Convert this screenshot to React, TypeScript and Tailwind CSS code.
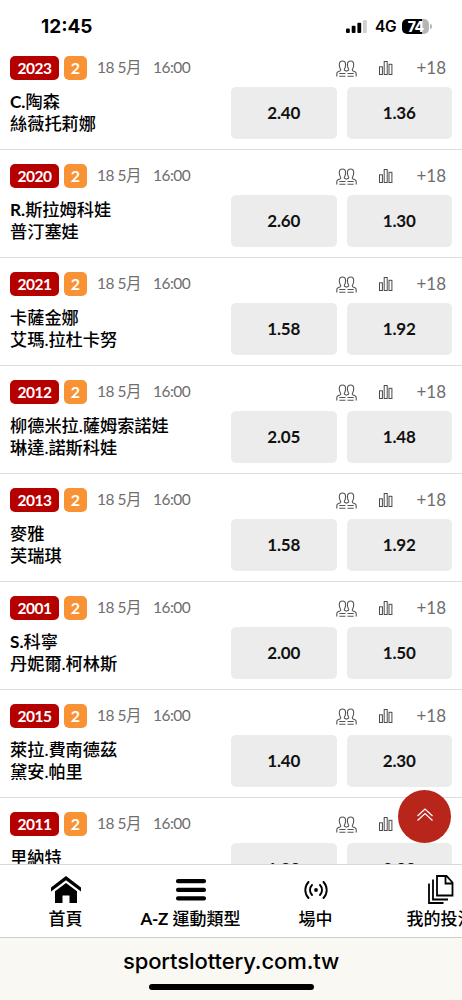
import type { ReactNode } from "react";

type Match = {
  code: string;
  initial?: string;
  home: string;
  away?: string;
  odds: [string, string];
};

const matches: Match[] = [
  { code: "2023", initial: "C.", home: "陶森", away: "絲薇托莉娜", odds: ["2.40", "1.36"] },
  { code: "2020", initial: "R.", home: "斯拉姆科娃", away: "普汀塞娃", odds: ["2.60", "1.30"] },
  { code: "2021", home: "卡薩金娜", away: "艾瑪.拉杜卡努", odds: ["1.58", "1.92"] },
  { code: "2012", home: "柳德米拉.薩姆索諾娃", away: "琳達.諾斯科娃", odds: ["2.05", "1.48"] },
  { code: "2013", home: "麥雅", away: "芙瑞琪", odds: ["1.58", "1.92"] },
  { code: "2001", initial: "S.", home: "科寧", away: "丹妮爾.柯林斯", odds: ["2.00", "1.50"] },
  { code: "2015", home: "萊拉.費南德茲", away: "黛安.帕里", odds: ["1.40", "2.30"] },
  { code: "2011", home: "里納特", odds: ["1.80", "2.00"] },
];

function StatusBar() {
  return (
    <header className="flex h-[42px] shrink-0 items-center justify-between pt-[11px] pr-[30px] pl-[41px] font-['Inter','Liberation_Sans',sans-serif]">
      <span className="text-[19px] leading-none font-bold">12:45</span>
      <div className="flex items-center gap-[6px]">
        <svg width="21" height="13" viewBox="0 0 21 13" className="mr-[2px]">
          <rect x="0" y="8.5" width="3.8" height="4.5" rx="1" />
          <rect x="5.7" y="5.8" width="3.8" height="7.2" rx="1" />
          <rect x="11.4" y="2.8" width="3.8" height="10.2" rx="1" />
          <rect x="17" y="0" width="3.8" height="13" rx="1" fill="#cfcfcf" />
        </svg>
        <span className="text-[15.5px] leading-none font-semibold tracking-[-0.5px]">4G</span>
        <div className="flex items-center gap-px">
          <div className="flex h-[15px] w-[27px] items-center justify-center rounded-[5px] bg-[linear-gradient(90deg,#000_74%,#b5b5b5_74%)] text-[14px] leading-none font-extrabold tracking-[-0.7px] text-white">
            74
          </div>
          <div className="h-[5px] w-[2px] rounded-r-full bg-[#b5b5b5]" />
        </div>
      </div>
    </header>
  );
}

function PeopleIcon() {
  return (
    <svg width="21" height="17" viewBox="0 0 21 17" fill="none" stroke="#555" strokeWidth="1.1">
      <path d="M.8 16.500v-2.800c0-1.300.6-1.900 1.700-2.300l1.400-.5c.9-.4 1-1.100.5-1.900C3.600 7.700 3.300 6.200 3.300 4.500 3.300 2.200 4.500 1 6.400 1s3.200 1.200 3.200 3.500c0 1.600-.3 3-1.100 4.400-.4.900-.2 1.400.6 1.700l1.400.6 1.400-.6c.8-.3 1-.8.6-1.700-.8-1.400-1.100-2.800-1.100-4.400C11.400 2.200 12.700 1 14.600 1s3.100 1.200 3.100 3.500c0 1.700-.3 3.200-1.100 4.500-.5.800-.4 1.500.5 1.900l1.400.5c1.100.4 1.700 1 1.700 2.300v2.800" />
      <path d="M3.300 13.500h6.200M3.300 16.200h6.200M11.500 13.500h6.200M11.500 16.200h6.200" />
    </svg>
  );
}

function StatsIcon() {
  return (
    <svg width="14" height="14" viewBox="0 0 14 14" fill="none" stroke="#4a4a4a" strokeWidth="1">
      <rect x="0.500" y="5.800" width="2.900" height="7.700" />
      <rect x="5.200" y="0.500" width="3" height="13" />
      <rect x="10" y="3.300" width="2.900" height="10.200" />
    </svg>
  );
}

function MatchRow({ match }: { match: Match }) {
  return (
    <article className="flex h-[108px] shrink-0 flex-col border-b border-[#dedede] pr-[10px] pl-[10px]">
      <div className="flex pt-[14px]">
        <div className="flex h-6 items-center text-[15.500px] leading-6 text-white">
          <span className="w-[49px] rounded-[5px] bg-[#b60000] text-center font-bold tracking-[-0.450px]">{match.code}</span>
          <span className="ml-[5px] w-[23px] rounded-[5px] bg-[#f99235] text-center text-[16px] font-bold">2</span>
        </div>
        <div className="ml-[10px] flex h-6 items-center gap-[12px] text-[15.500px] tracking-[-0.500px] text-[#6e6e6e]">
          <span>18 5月</span>
          <span>16:00</span>
        </div>
        <div className="ml-auto flex h-6 items-center pr-[6px]">
          <PeopleIcon />
          <span className="ml-[22px]">
            <StatsIcon />
          </span>
          <span className="ml-[23px] text-[17px] text-[#6e6e6e]">+18</span>
        </div>
      </div>
      <div className="mt-[7px] flex justify-between">
        <div className="pt-[4px] text-[17.200px] leading-[22px] font-medium whitespace-nowrap text-black">
          <p>
            {match.initial && <span className="font-bold">{match.initial}</span>}
            {match.home}
          </p>
          <p>{match.away}</p>
        </div>
        <div className="flex gap-[10px]">
          {match.odds.map((odd, i) => (
            <button
              key={i}
              className="h-[52px] w-[105.500px] rounded-[5px] bg-[#ececec] text-[17px] font-bold tracking-[-0.150px] text-[#111]"
            >
              {odd}
            </button>
          ))}
        </div>
      </div>
    </article>
  );
}

function HomeIcon() {
  return (
    <svg width="30" height="27" viewBox="0 0 30 27">
      <path d="M15 0 0 11.500v4L15 4.200l15 11.300v-4z" />
      <path d="M15 7 4 15.200V27h7.500v-7.500h7V27H26V15.200z" />
    </svg>
  );
}

function MenuIcon() {
  return (
    <svg width="30" height="22" viewBox="0 0 30 22">
      <rect width="30" height="4.200" rx="2" />
      <rect y="8.700" width="30" height="4.200" rx="2" />
      <rect y="17.300" width="30" height="4.200" rx="2" />
    </svg>
  );
}

function LiveIcon() {
  return (
    <svg width="24" height="18" viewBox="0 0 24 18" fill="none" stroke="#000" strokeWidth="1.900" strokeLinecap="round">
      <path d="M4.500 1C.2 5.500.2 12.500 4.500 17M19.500 1c4.300 4.500 4.300 11.500 0 16M8 4c-2.700 2.900-2.700 7.100 0 10M16 4c2.700 2.900 2.700 7.100 0 10" />
      <circle cx="12" cy="9" r="1.900" fill="#000" stroke="none" />
    </svg>
  );
}

function BetsIcon() {
  return (
    <svg width="26" height="29" viewBox="0 0 26 29" fill="none" stroke="#000" strokeWidth="1.800">
      <path d="M9 1h9.500l6 6.500V20.500H9zM17.500 1v7.500h7" />
      <path d="M5 4.500V24.500h15M1 8.500V28h14.500" />
    </svg>
  );
}

function NavItem({ icon, label }: { icon: ReactNode; label: ReactNode }) {
  return (
    <a className="flex w-[125px] shrink-0 flex-col items-center">
      <span className="flex h-[31px] items-center">{icon}</span>
      <span className="mt-[2px] text-[17px] leading-6 font-medium whitespace-nowrap">{label}</span>
    </a>
  );
}

export default function App() {
  return (
    <div className="relative flex h-[1000px] w-[462px] flex-col overflow-hidden bg-white font-['Lato','Noto_Sans_CJK_TC',sans-serif] text-black">
      <StatusBar />
      <main className="flex min-h-0 flex-1 flex-col overflow-hidden">
        {matches.map((match) => (
          <MatchRow key={match.code} match={match} />
        ))}
      </main>
      <nav className="flex h-[73px] shrink-0 overflow-hidden border-t border-[#d8d8d8] bg-white pt-[9px] pl-[3px]">
        <NavItem icon={<HomeIcon />} label="首頁" />
        <NavItem icon={<MenuIcon />} label={<><span className="font-bold tracking-[-0.300px]">A-Z</span> 運動類型</>} />
        <NavItem icon={<LiveIcon />} label="場中" />
        <NavItem icon={<BetsIcon />} label="我的投注" />
      </nav>
      <footer className="flex h-[63px] shrink-0 flex-col items-center border-t border-[#cfcdc8] bg-[#faf8f2] font-['Inter','Liberation_Sans',sans-serif]">
        <span className="mt-[8px] text-[22px] leading-[30px] font-medium tracking-[-0.100px]">sportslottery.com.tw</span>
        <span className="mt-[8px] h-[6px] w-[165px] rounded-full bg-black" />
      </footer>
      <button className="absolute top-[790px] right-[11px] flex size-[53px] items-center justify-center rounded-full bg-[#b8251b]">
        <svg width="16" height="13" viewBox="0 0 16 13" fill="none" stroke="#fff" strokeWidth="1.200" className="-mt-[5px]">
          <path d="M.5 8 8 1l7.500 7M.5 12.500 8 5.500l7.500 7" />
        </svg>
      </button>
    </div>
  );
}
